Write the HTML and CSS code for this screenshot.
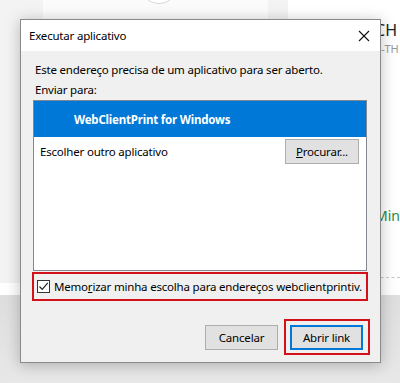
FILE: index.html
```html
<!DOCTYPE html>
<html>
    <head>
        <meta charset="UTF-8">
        <link rel="stylesheet" href="styles.css">
        <title>Executar aplicativo</title>
    </head>
    <body>
        <div class="backdrop">
            <div class="cards">
                <div class="gutter"></div>
                <div class="card">
                    <div class="avatar"></div>
                </div>
                <div class="card card-right">
                    <div class="card-title">CH</div>
                    <div class="card-sub">0-TH</div>
                    <div class="card-green">Min</div>
                    <div class="card-dash"></div>
                </div>
            </div>
            <div class="band"></div>
            <div class="floor"></div>
        </div>

        <div class="dialog">
            <div class="titlebar">
                <span class="title">Executar aplicativo</span>
                <svg class="close" width="12" height="12" viewBox="0 0 12 12">
                    <path d="M1 1 L11 11 M11 1 L1 11" stroke="#111" stroke-width="1.1" fill="none"/>
                </svg>
            </div>
            <div class="body">
                <div class="line">Este endereço precisa de um aplicativo para ser aberto.</div>
                <div class="line">Enviar para:</div>
                <div class="list">
                    <div class="item selected">WebClientPrint for Windows</div>
                    <div class="item other">
                        <span>Escolher outro aplicativo</span>
                        <div class="btn browse"><u>P</u>rocurar...</div>
                    </div>
                </div>
                <div class="remember">
                    <span class="check">
                        <svg width="11" height="11" viewBox="0 0 11 11">
                            <path d="M1.5 5.5 L4.2 8.3 L9.8 1.8" stroke="#222" stroke-width="1.2" fill="none"/>
                        </svg>
                    </span>
                    <span>Memo<u>r</u>izar minha escolha para endereços webclientprintiv.</span>
                </div>
                <div class="actions">
                    <div class="btn cancel">Cancelar</div>
                    <div class="mark">
                        <div class="btn open">Abrir link</div>
                    </div>
                </div>
            </div>
        </div>
    </body>
</html>
```

FILE: styles.css
```css
body{
    margin: 0;
    width: 400px;
    height: 383px;
    overflow: hidden;
    font-family: "Noto Sans", "Liberation Sans", sans-serif;
    font-size: 12px;
    color: #000;
}

.backdrop{
    display: flex;
    flex-direction: column;
    height: 383px;
    background: #f3f3f3;
}
.cards{
    display: flex;
    height: 283px;
    gap: 20px;
}
.gutter{
    width: 23px;
}
.card{
    width: 230px;
    background: #fbfbfb;
    position: relative;
}
.card-right{
    flex: 1;
    background: #fff;
    padding-left: 87px;
}
.avatar{
    position: absolute;
    left: 97px;
    top: -34px;
    width: 36px;
    height: 36px;
    border: 1px solid #d8d8d8;
    border-radius: 50%;
    background: #fff;
}
.card-title{
    margin-top: 19px;
    font-size: 16px;
    color: #222;
}
.card-sub{
    font-size: 11px;
    color: #999;
}
.card-green{
    margin-top: 150px;
    font-size: 14px;
    color: #2e8b3a;
}
.card-dash{
    margin-top: 52px;
    border-top: 1px dashed #c8c8c8;
}
.band{
    height: 12px;
    background: #fff;
}
.floor{
    flex: 1;
    background: linear-gradient(#dedede, #e8e8e8);
}

.dialog{
    position: absolute;
    left: 20px;
    top: 19px;
    width: 361px;
    height: 344px;
    box-sizing: border-box;
    border: 1px solid #8a8a8a;
    background: #f0f0f0;
    box-shadow: 0 2px 14px rgba(0,0,0,0.25);
    display: flex;
    flex-direction: column;
    font-size: 11.5px;
    letter-spacing: -0.2px;
    white-space: nowrap;
}
.titlebar{
    height: 31px;
    background: #fff;
    display: flex;
    align-items: center;
    justify-content: space-between;
    padding: 0 10px 0 8px;
}
.close{
    margin-top: 1px;
}

.body{
    flex: 1;
    padding: 9px 10px 0 11px;
    display: flex;
    flex-direction: column;
}
.line{
    height: 20px;
    line-height: 20px;
    padding-left: 3px;
}
.list{
    margin-left: 1px;
    width: 334px;
    height: 171px;
    box-sizing: border-box;
    border: 1px solid #828790;
    background: #fff;
}
.item{
    display: flex;
    align-items: center;
}
.selected{
    height: 36px;
    background: #0078d7;
    color: #fff;
    font-weight: bold;
    padding-left: 40px;
}
.other{
    justify-content: space-between;
    padding: 2px 7px 0 6px;
}

.btn{
    box-sizing: border-box;
    border: 1px solid #adadad;
    background: #e1e1e1;
    display: flex;
    align-items: center;
    justify-content: center;
}
.browse{
    width: 74px;
    height: 25px;
}

.remember{
    margin-top: 1px;
    height: 29px;
    width: 336px;
    box-sizing: border-box;
    border: 2px solid #d2111b;
    display: flex;
    align-items: center;
    gap: 4px;
    padding-left: 3px;
}
.check{
    width: 13px;
    height: 13px;
    flex: none;
    box-sizing: border-box;
    border: 1px solid #333;
    background: #fff;
    display: flex;
    align-items: center;
    justify-content: center;
}

.actions{
    margin-top: 18px;
    display: flex;
    justify-content: flex-end;
    align-items: center;
    gap: 6px;
}
.cancel{
    width: 73px;
    height: 25px;
}
.mark{
    border: 2px solid #d2111b;
    padding: 4px 5px 3px 4px;
}
.open{
    width: 73px;
    height: 25px;
    border: 2px solid #0078d7;
}
```
